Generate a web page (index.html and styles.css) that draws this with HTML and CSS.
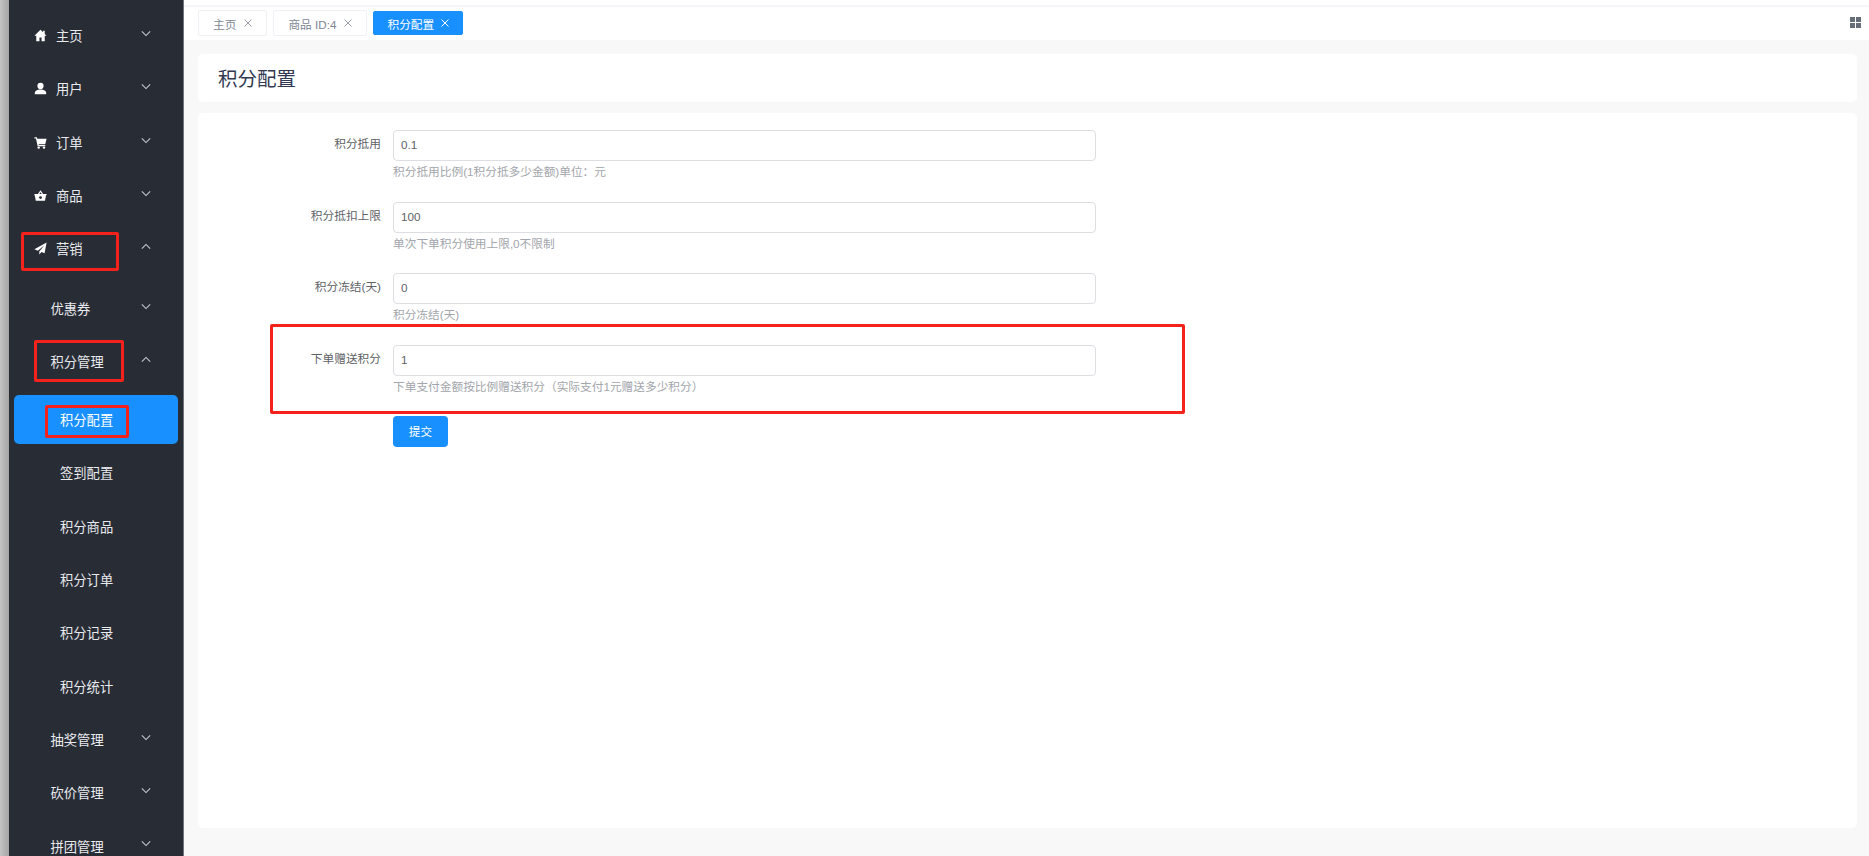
FILE: index.html
```html
<!DOCTYPE html>
<html lang="zh-CN">
<head>
<meta charset="utf-8">
<title>积分配置</title>
<link rel="stylesheet" href="styles.css">
</head>
<body>
<div class="strip"></div>
<aside class="sidebar">
  <ul class="menu">
    <li class="item top"><svg class="ico" viewBox="0 0 16 16"><path d="M8 1 .5 8.200h2.300V15h3.900v-4.500h2.600V15h3.900V8.200h2.300l-2.300-2.200V2h-2v2.100z"/></svg><span>主页</span><svg class="arrow" viewBox="0 0 12 8"><path d="M1 1.500 6 6.500 11 1.500"/></svg></li>
    <li class="item top"><svg class="ico" viewBox="0 0 16 16"><circle cx="8" cy="4.800" r="3.800"/><path d="M1 15v-1.500c0-2.800 3-4.300 7-4.300s7 1.500 7 4.300V15z"/></svg><span>用户</span><svg class="arrow" viewBox="0 0 12 8"><path d="M1 1.500 6 6.500 11 1.500"/></svg></li>
    <li class="item top"><svg class="ico" viewBox="0 0 16 16"><path d="M.5 1.500h3l.5 1.800h11.500l-1.700 6.700H5.600l.3 1.200h8v1.500H4.500L2.400 3H.5z"/><circle cx="5.800" cy="14.300" r="1.500"/><circle cx="12.300" cy="14.300" r="1.500"/></svg><span>订单</span><svg class="arrow" viewBox="0 0 12 8"><path d="M1 1.500 6 6.500 11 1.500"/></svg></li>
    <li class="item top"><svg class="ico" viewBox="0 0 16 16"><path fill-rule="evenodd" d="M4.800 6.300 8 1.500l3.200 4.800h4.300v1.500h-.7l-1.300 6.700H2.200L.9 7.800H.500V6.300zM6.500 6.300h3L8 4zM8 8.800a1.800 1.800 0 1 0 0 3.600 1.800 1.800 0 0 0 0-3.600z"/></svg><span>商品</span><svg class="arrow" viewBox="0 0 12 8"><path d="M1 1.500 6 6.500 11 1.500"/></svg></li>
    <li class="item top"><svg class="ico" viewBox="0 0 16 16"><path d="M15.500.5.500 9l4.300 1.800L12.800 4 6.500 11.700V15.500l2.700-3.200 3.800 1.600z"/></svg><span>营销</span><svg class="arrow" viewBox="0 0 12 8"><path d="M1 6.500 6 1.500 11 6.500"/></svg></li>
    <li class="item sub group-start"><span>优惠券</span><svg class="arrow" viewBox="0 0 12 8"><path d="M1 1.500 6 6.500 11 1.500"/></svg></li>
    <li class="item sub"><span>积分管理</span><svg class="arrow" viewBox="0 0 12 8"><path d="M1 6.500 6 1.500 11 6.500"/></svg></li>
    <li class="item leaf active group-start-b"><span>积分配置</span></li>
    <li class="item leaf"><span>签到配置</span></li>
    <li class="item leaf"><span>积分商品</span></li>
    <li class="item leaf"><span>积分订单</span></li>
    <li class="item leaf"><span>积分记录</span></li>
    <li class="item leaf"><span>积分统计</span></li>
    <li class="item sub"><span>抽奖管理</span><svg class="arrow" viewBox="0 0 12 8"><path d="M1 1.500 6 6.500 11 1.500"/></svg></li>
    <li class="item sub"><span>砍价管理</span><svg class="arrow" viewBox="0 0 12 8"><path d="M1 1.500 6 6.500 11 1.500"/></svg></li>
    <li class="item sub"><span>拼团管理</span><svg class="arrow" viewBox="0 0 12 8"><path d="M1 1.500 6 6.500 11 1.500"/></svg></li>
  </ul>
  <div class="mark mark-a"></div>
  <div class="mark mark-b"></div>
  <div class="mark mark-c"></div>
</aside>
<main class="main">
  <div class="topline"></div>
  <nav class="tabbar">
    <div class="tab"><span>主页</span><svg class="x" viewBox="0 0 8 8"><path d="M.5.500l7 7M7.500.500l-7 7"/></svg></div>
    <div class="tab"><span>商品 ID:4</span><svg class="x" viewBox="0 0 8 8"><path d="M.5.500l7 7M7.500.500l-7 7"/></svg></div>
    <div class="tab current"><span>积分配置</span><svg class="x" viewBox="0 0 8 8"><path d="M.5.500l7 7M7.500.500l-7 7"/></svg></div>
    <svg class="grid" viewBox="0 0 11 11"><rect width="5" height="5"/><rect x="6" width="5" height="5"/><rect y="6" width="5" height="5"/><rect x="6" y="6" width="5" height="5"/></svg>
  </nav>
  <div class="content">
    <header class="card title-card"><h1>积分配置</h1></header>
    <section class="card form-card">
      <div class="row">
        <label class="label">积分抵用</label>
        <div class="field"><div class="input">0.1</div><p class="help">积分抵用比例(1积分抵多少金额)单位：元</p></div>
      </div>
      <div class="row">
        <label class="label">积分抵扣上限</label>
        <div class="field"><div class="input">100</div><p class="help">单次下单积分使用上限,0不限制</p></div>
      </div>
      <div class="row">
        <label class="label">积分冻结(天)</label>
        <div class="field"><div class="input">0</div><p class="help">积分冻结(天)</p></div>
      </div>
      <div class="row">
        <label class="label">下单赠送积分</label>
        <div class="field"><div class="input">1</div><p class="help">下单支付金额按比例赠送积分（实际支付1元赠送多少积分）</p></div>
      </div>
      <div class="row-btn"><button class="btn">提交</button></div>
      <div class="mark mark-d"></div>
    </section>
  </div>
</main>
</body>
</html>
```
FILE: styles.css
```css
* { box-sizing: border-box; }
html, body { margin: 0; height: 856px; overflow: hidden; }
body {
  display: flex;
  font-family: "Liberation Sans", "Noto Sans CJK SC", sans-serif;
  background: #f8f8f8;
  color: #515a6e;
}
.strip {
  width: 9px;
  flex: none;
  background: linear-gradient(90deg, #c4c4c4, #a4a4a4);
}
.sidebar {
  position: relative;
  width: 175px;
  flex: none;
  background: #282c35;
  border-right: 1px solid #70747b;
  padding-top: 9px;
  overflow: hidden;
}
.menu { list-style: none; margin: 0; padding: 0; }
.item {
  position: relative;
  display: flex;
  align-items: center;
  height: 53.330px;
  font-size: 13.300px;
  color: #e8eaee;
}
.group-start { margin-top: 6px; }
.group-start-b { margin-top: 4.500px; }
.top { padding-left: 24.500px; }
.ico { width: 13px; height: 13px; fill: #fff; margin-right: 9.500px; flex: none; }
.sub { padding-left: 41.500px; }
.leaf { padding-left: 51px; }
.arrow {
  position: absolute;
  left: 132px;
  top: 21px;
  width: 10px;
  height: 7px;
  fill: none;
  stroke: #c5c8ce;
  stroke-width: 1.300;
}
.active { color: #fff; }
.active::before {
  content: "";
  position: absolute;
  left: 5px;
  top: 2px;
  width: 164px;
  height: 49px;
  border-radius: 5px;
  background: #1890ff;
}
.active span { position: relative; }
.mark {
  position: absolute;
  border: 3px solid #f5221b;
  border-radius: 2px;
  pointer-events: none;
}
.mark-a { left: 12px; top: 232px; width: 98px; height: 39px; }
.mark-b { left: 25px; top: 340px; width: 90px; height: 42px; }
.mark-c { left: 36px; top: 405px; width: 84px; height: 33px; }
.main { flex: 1; min-width: 0; display: flex; flex-direction: column; }
.topline { height: 7px; background: #fff; border-bottom: 2px solid #f4f4fb; }
.tabbar {
  height: 33px;
  display: flex;
  align-items: center;
  gap: 6px;
  padding: 0 8px 1px 14px;
  background: #fff;
}
.tab {
  display: flex;
  align-items: center;
  height: 26px;
  padding: 0 14px;
  gap: 8px;
  border: 1px solid #eef0f6;
  border-radius: 2px;
  background: #fff;
  font-size: 11.700px;
  color: #808695;
}
.x { width: 8px; height: 8px; fill: none; stroke: #9a9ea8; stroke-width: 1; }
.current {
  height: 24px;
  padding: 0 13px;
  gap: 7px;
  border-color: #1890ff;
  background: #1890ff;
  color: #fff;
}
.current .x { stroke: #fff; }
.grid { margin-left: auto; margin-top: -2px; width: 11px; height: 11px; fill: #666c78; }
.content {
  flex: 1;
  display: flex;
  flex-direction: column;
  gap: 11px;
  padding: 14px 12px 28px 14px;
}
.card { background: #fff; border-radius: 5px; }
.title-card { height: 48px; display: flex; align-items: center; padding: 0 0 2px 20px; }
h1 { margin: 0; font-size: 19.500px; font-weight: 400; color: #323851; }
.form-card { position: relative; flex: 1; padding-top: 17px; }
.row { display: flex; height: 71.670px; }
.label {
  width: 195px;
  padding-right: 12px;
  height: 28px;
  line-height: 28px;
  text-align: right;
  font-size: 11.700px;
  color: #606266;
}
.field { width: 703px; }
.input {
  height: 31px;
  line-height: 28px;
  padding: 0 7px;
  border: 1px solid #dcdee2;
  border-radius: 4px;
  font-size: 11.700px;
  color: #606266;
  background: #fff;
}
.help {
  margin: 3px 0 0;
  line-height: 16px;
  font-size: 11.700px;
  color: #a2a5ab;
}
.row-btn { padding-left: 195px; margin-top: -1px; }
.btn {
  display: block;
  width: 55px;
  height: 31px;
  padding: 0 0 2px;
  border: 0;
  border-radius: 4px;
  background: #1890ff;
  color: #fff;
  font: inherit;
  font-size: 11.700px;
}
.mark-d { left: 72px; top: 211px; width: 915px; height: 90px; }
```
